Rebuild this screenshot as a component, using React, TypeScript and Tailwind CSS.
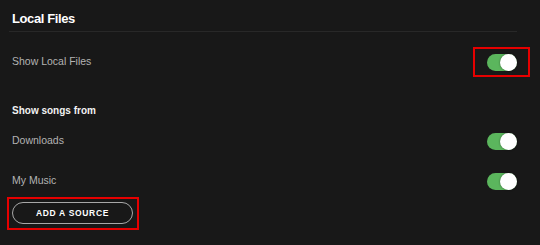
import React from "react";

interface ToggleProps {
  on?: boolean;
}

const Toggle = ({ on = true }: ToggleProps) => (
  <div
    className={`relative w-[30px] h-[17px] rounded-full ${on ? "bg-[#5bb65d]" : "bg-[#535353]"}`}
  >
    <div
      className={`absolute top-0 h-[17px] w-[17px] rounded-full bg-white shadow-[0_0_2px_rgba(0,0,0,0.5)] ${on ? "right-0" : "left-0"}`}
    />
  </div>
);

const SettingRow = ({ label }: { label: string }) => (
  <div className="flex h-[30px] items-center justify-between">
    <span className="text-[10.5px] text-[#b3b3b3]">{label}</span>
    <Toggle />
  </div>
);

export default function App() {
  return (
    <div
      className="relative h-[245px] w-[540px] overflow-hidden bg-[#181818] pl-3 pr-[23px]"
      style={{ fontFamily: '"Liberation Sans", Arial, sans-serif' }}
    >
      <div className="-ml-[3px] h-[32px] border-b border-[#282828] pl-[3px] pt-[11px]">
        <h2 className="text-[13px] font-bold leading-4 tracking-[-0.4px] text-white">Local Files</h2>
      </div>

      <div className="mt-[15px]">
        <SettingRow label="Show Local Files" />
      </div>

      <div className="mt-[23px] flex h-[20px] items-center">
        <span className="text-[10px] font-bold text-[#f2f2f2]">Show songs from</span>
      </div>

      <div className="mt-[6px] flex flex-col gap-[10px]">
        <SettingRow label="Downloads" />
        <SettingRow label="My Music" />
      </div>

      <button className="mt-[6px] flex h-[22px] w-[121px] items-center justify-center rounded-full border border-[#a8a8a8] text-[8.5px] font-bold tracking-[0.08em] text-white">
        ADD A SOURCE
      </button>

      {/* highlight boxes */}
      <div className="pointer-events-none absolute left-[473px] top-[47px] h-[30px] w-[57px] border-2 border-[#e60000]" />
      <div className="pointer-events-none absolute left-[7px] top-[197px] h-[33px] w-[132px] border-2 border-[#e60000]" />
    </div>
  );
}
